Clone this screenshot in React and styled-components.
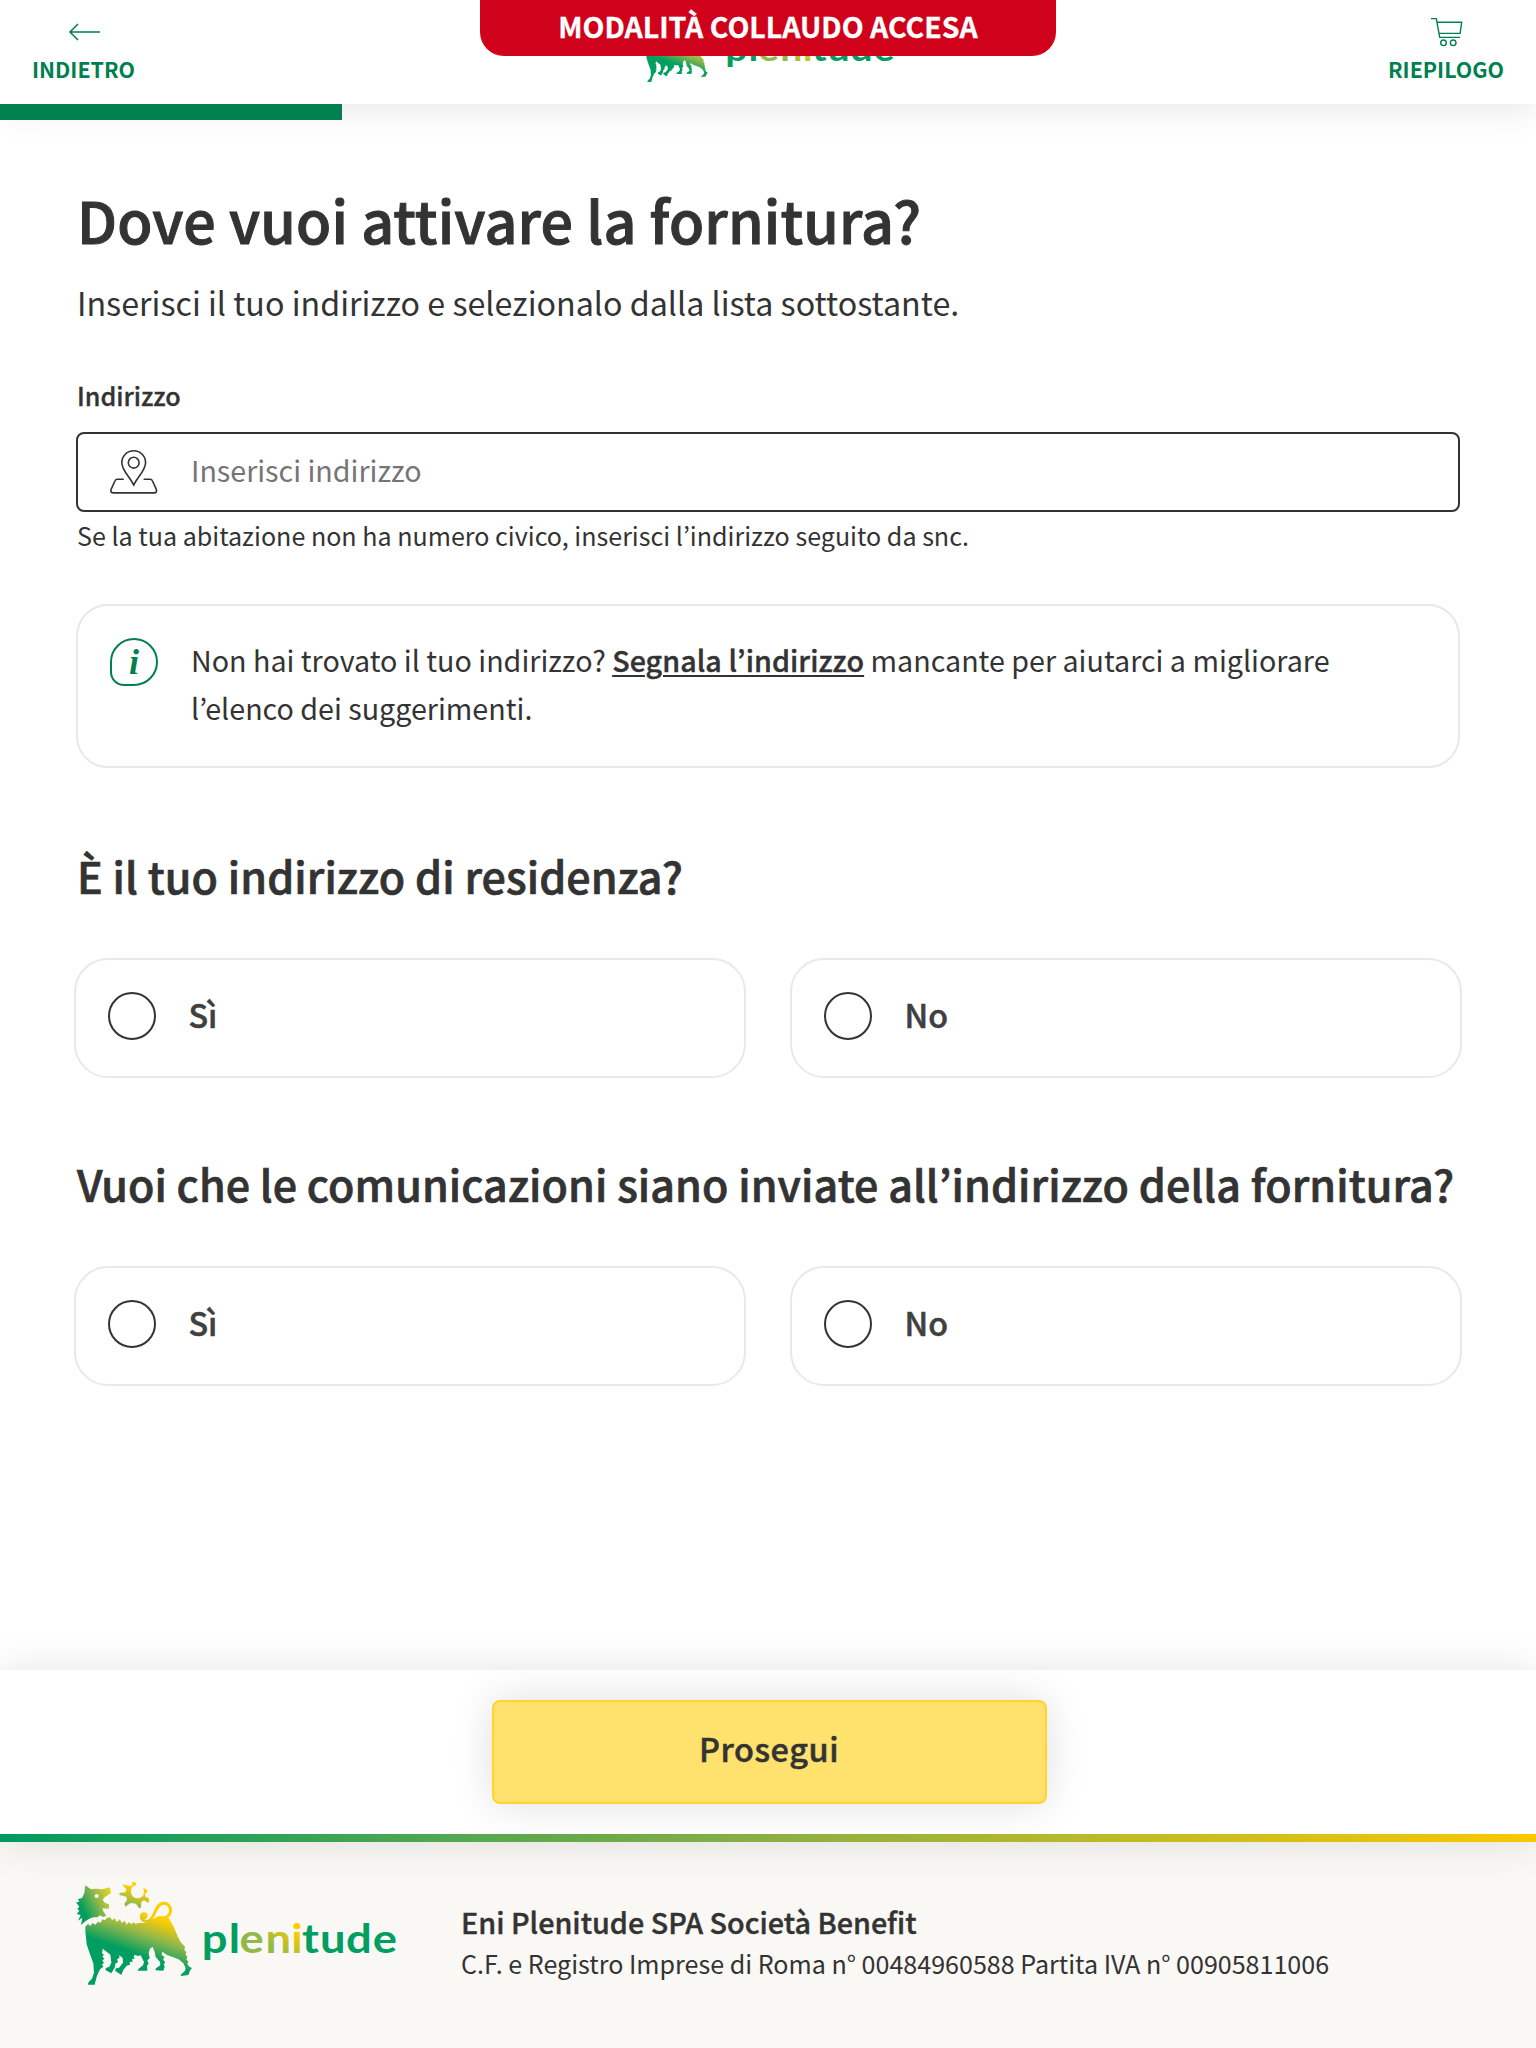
import React from "react";
import styled, { createGlobalStyle } from "styled-components";

const GREEN = "#00804f";
const INK = "#333333";
const LINE = "#e9e9e9";

const GlobalStyle = createGlobalStyle`
  *, *::before, *::after { box-sizing: border-box; }
  body {
    margin: 0;
    background: #fff;
    color: ${INK};
    font-family: "Noto Sans CJK JP", "Noto Sans", sans-serif;
    font-weight: 400;
  }
  h1, h2, p { margin: 0; }
`;

const Page = styled.div`
  display: flex;
  flex-direction: column;
  height: 2048px;
  overflow: hidden;
`;

/* ---------- header ---------- */

const Header = styled.header`
  position: relative;
  z-index: 1;
  display: grid;
  grid-template-columns: 1fr auto 1fr;
  height: 104px;
  padding: 0 32px;
  background: #fff;
  box-shadow: 0 0 40px rgba(0, 0, 0, 0.13);
`;

const HeaderAction = styled.button`
  justify-self: ${(p) => p.$side};
  display: flex;
  flex-direction: column;
  align-items: center;
  height: 104px;
  padding: 14px 0 0;
  border: 0;
  background: none;
  color: ${GREEN};
  font: 700 21.4px/36px "Noto Sans CJK JP", sans-serif;
  cursor: pointer;

  svg { flex: none; margin-bottom: 1px; }
`;

const HeaderLogo = styled.div`
  display: flex;
  align-items: flex-start;
  width: 263px;
  padding-top: 19px;

  svg { flex: none; }
`;

const TestBanner = styled.div`
  position: absolute;
  top: 0;
  left: 50%;
  z-index: 3;
  width: 576px;
  height: 56px;
  margin-left: -288px;
  border-radius: 0 0 24px 24px;
  background: #d0021b;
  color: #fff;
  font-size: 28.5px;
  font-weight: 700;
  line-height: 52px;
  text-align: center;
  -webkit-text-stroke: 0.3px;
`;

const Progress = styled.div`
  position: relative;
  z-index: 2;
  flex: none;
  width: 342px;
  height: 16px;
  background: ${GREEN};
`;

/* ---------- content ---------- */

const Main = styled.main`
  flex: 1;
  padding: 68px 76px 0;
`;

const Title = styled.h1`
  padding-left: 1px;
  font-size: 57.3px;
  font-weight: 500;
  line-height: 64px;
  letter-spacing: 0.16px;
  -webkit-text-stroke: 1px;
`;

const Lead = styled.p`
  margin-top: 26px;
  padding-left: 1px;
  font-size: 32.22px;
  line-height: 48px;
`;

const Label = styled.label`
  display: block;
  margin-top: 49px;
  padding-left: 1px;
  font-size: 25.1px;
  font-weight: 500;
  line-height: 40px;
  -webkit-text-stroke: 0.35px;
`;

const Field = styled.div`
  display: flex;
  align-items: center;
  height: 80px;
  margin-top: 17px;
  padding: 0 32px;
  border: 2px solid ${INK};
  border-radius: 8px;
`;

const Input = styled.input`
  flex: 1;
  height: 60px;
  margin-left: 33px;
  padding: 0 0 5px;
  border: 0;
  outline: 0;
  background: none;
  color: ${INK};
  font: 400 28.65px "Noto Sans CJK JP", sans-serif;

  &::placeholder { color: #757575; opacity: 1; }
`;

const Hint = styled.p`
  margin-top: 3px;
  padding-left: 1px;
  font-size: 25.07px;
  line-height: 40px;
`;

const Notice = styled.div`
  display: flex;
  gap: 33px;
  margin-top: 49px;
  height: 164px;
  padding: 32px;
  border: 2px solid ${LINE};
  border-radius: 32px;
`;

const InfoBadge = styled.span`
  flex: none;
  display: flex;
  justify-content: center;
  width: 48px;
  height: 48px;
  border: 2.5px solid ${GREEN};
  border-radius: 24px 24px 24px 14px;
  color: ${GREEN};
  font: italic 700 36px/45px "Liberation Serif", serif;
`;

const NoticeText = styled.p`
  margin-top: -2px;
  width: 1190px;
  font-size: 28.67px;
  line-height: 48px;

  a {
    color: inherit;
    font-weight: 500;
    letter-spacing: 0.07px;
    text-decoration: underline;
    text-decoration-thickness: 2px;
    text-underline-offset: 3px;
    -webkit-text-stroke: 0.4px;
  }
`;

const Question = styled.section`
  margin-top: ${(p) => p.$gap}px;
`;

const QuestionTitle = styled.h2`
  padding-left: 1px;
  font-size: 43px;
  font-weight: 500;
  line-height: 60px;
  letter-spacing: 0.07px;
  white-space: nowrap;
  -webkit-text-stroke: 0.7px;
`;

const Options = styled.div`
  display: grid;
  grid-template-columns: 1fr 1fr;
  gap: 44px;
  margin: 53px -2px 0;
`;

const Option = styled.div`
  display: flex;
  align-items: flex-start;
  gap: 32.5px;
  height: 120px;
  padding: 32px;
  border: 2px solid ${LINE};
  border-radius: 34px;
  color: #404040;
`;

const Radio = styled.span`
  width: 48px;
  height: 48px;
  border: 2px solid ${INK};
  border-radius: 50%;
`;

const OptionLabel = styled.span`
  padding-top: 2px;
  font-size: 32.25px;
  font-weight: 500;
  line-height: 40px;
  -webkit-text-stroke: 0.5px;
`;

/* ---------- bottom ---------- */

const ActionBar = styled.div`
  position: relative;
  z-index: 1;
  flex: none;
  display: flex;
  justify-content: center;
  height: 172px;
  padding: 30px 0 0 2px;
  border-bottom: 8px solid;
  border-image: linear-gradient(90deg, #009b5f, #8cb046 50%, #fac800) 1;
  background: #fff;
  box-shadow: 0 0 40px rgba(0, 0, 0, 0.11);
`;

const Submit = styled.button`
  width: 555px;
  height: 104px;
  padding: 0 0 8px;
  border: 2px solid #ffd42e;
  border-radius: 8px;
  background: #ffe26e;
  box-shadow: 0 0 40px rgba(0, 0, 0, 0.13);
  color: ${INK};
  font: 500 32.4px/40px "Noto Sans CJK JP", sans-serif;
  letter-spacing: 0.6px;
  -webkit-text-stroke: 0.5px;
`;

const Footer = styled.footer`
  flex: none;
  display: flex;
  height: 206px;
  padding: 34px 70px 0;
  background: #faf8f5;
`;

const FooterLogo = styled.div`
  display: flex;
  align-items: flex-start;
  width: 391px;
`;

const WordmarkSlot = styled.div`
  display: flex;
  padding-top: ${(p) => p.$top}px;
  margin-left: ${(p) => p.$left}px;
`;

const Company = styled.div`
  padding-top: 25px;
  white-space: nowrap;
`;

const CompanyName = styled.p`
  font-size: 28.75px;
  font-weight: 500;
  line-height: 42px;
  -webkit-text-stroke: 0.4px;
`;

const CompanyData = styled.p`
  font-size: 25.07px;
  line-height: 40px;
`;

/* ---------- drawings ---------- */

function SixLeggedDog({ width, id, paper }) {
  return (
    <svg width={width} height={(width * 342) / 390} viewBox="0 0 390 342" aria-hidden="true">
      <defs>
        <linearGradient id={`${id}-body`} gradientUnits="userSpaceOnUse" x1="262" y1="120" x2="215" y2="255">
          <stop offset="0.05" stopColor="#ffcd00" />
          <stop offset="0.45" stopColor="#93b84a" />
          <stop offset="0.9" stopColor="#009e60" />
        </linearGradient>
        <linearGradient id={`${id}-head`} gradientUnits="userSpaceOnUse" x1="34" y1="95" x2="122" y2="50">
          <stop offset="0" stopColor="#009e60" />
          <stop offset="0.55" stopColor="#93b84a" />
          <stop offset="1" stopColor="#dfd624" />
        </linearGradient>
        <linearGradient id={`${id}-sun`} gradientUnits="userSpaceOnUse" x1="182" y1="86" x2="204" y2="24">
          <stop offset="0" stopColor="#93b84a" />
          <stop offset="0.8" stopColor="#ffcd00" />
        </linearGradient>
      </defs>
      <path
        fill={`url(#${id}-head)`}
        d="M46 28L63 40L78 38L97 40L120 34L123 51L104 64L98 71L104 80L117 85L117 98L97 97L100 106L109 119L100 123L90 118L82 124L70 124L58 128L46 136L33 147L37 125L24 134L32 117L20 114L28 104L22 98L28 92L18 79L28 78L24 69L36 66L43 52Z"
      />
      <circle cx="80" cy="60" r="6" fill={paper} />
      <path
        fill={`url(#${id}-sun)`}
        d="M156 25L178 30L188 28L186 18L199 20L197 28C184 31 181 43 184 53C189 69 211 72 220 57C222 52 222 48 220 36L232 42L231 50L226 52L225 61L238 68L236 81L222 73L214 78L213 95L207 97L198 83L182 81L166 92L163 84L171 72L169 62L148 57L149 51L166 49L169 40Z"
      />
      <g fill="none" stroke={`url(#${id}-body)`} strokeWidth="9" strokeLinecap="round">
        <path d="M238 135C256 122 256 84 279 82C298 81 305 98 300 111C297 121 288 125 278 129" />
        <path d="M242 132C232 139 213 136 214 121C216 109 231 112 228 121C227 125 223 125 222 123" />
      </g>
      <path
        fill={`url(#${id}-body)`}
        d="M46 166L46 152L54 144L61 149L68 141L76 146L84 137L92 140L97 130L105 133L110 126L120 124L127 133L134 127L140 138L150 130L155 141L165 134L169 146L177 138L184 145L190 139L197 144L205 141L222 141L240 135L264 121L290 121L298 130L310 150L325 185L332 198L345 212L343 222L349 228L347 236L352 242L349 250L355 257L352 264L358 272L366 276L360 284L355 297L333 300L332 296L345 284L347 276L340 262L326 250L308 243L290 236L277 227L275 236L284 244L279 250L286 260L281 264L284 272L280 284L256 283L258 277L271 268L270 258L257 243L254 228L248 212L240 218L236 232L239 247L232 253L236 263L231 269L232 284L203 284L206 278L219 268L222 258L216 246L212 238L204 240L194 236L191 242L194 248L186 250L188 257L179 258L180 266L170 269L160 282L154 297L135 284L138 277L147 275L159 260L158 246L148 238L148 246L141 250L144 258L136 263L134 275L124 292L106 282L108 276L118 272L124 260L121 236L98 218L96 232L102 236L97 241L103 249L97 253L102 261L96 265L100 272L90 280L80 302L74 326L53 326L56 318L66 308L72 290L70 262L60 235L50 205Z"
      />
    </svg>
  );
}

const LETTERS = [
  ["p", -3.2, 0], ["l", 23.7, 0], ["e", 34.6, 1], ["n", 60.4, 1], ["i", 86.2, 1],
  ["t", 97, 0], ["u", 114.9, 0], ["d", 140.9, 0], ["e", 167.8, 0],
];

function Wordmark({ scale, id }) {
  const stretch = 1.12;
  return (
    <svg width={200 * scale} height={44 * scale} viewBox="0 -34 200 44" overflow="visible" aria-label="plenitude">
      <defs>
        <linearGradient id={`${id}-eni`} gradientUnits="userSpaceOnUse" x1="60" y1="-6" x2="80" y2="-26">
          <stop offset="0" stopColor="#93b84a" />
          <stop offset="1" stopColor="#ffcd00" />
        </linearGradient>
      </defs>
      <g transform={`scale(${stretch} 1)`} fontFamily="Lato, sans-serif" fontWeight="700" fontSize="40.5">
        {LETTERS.map(([ch, x, accent], i) => (
          <text key={i} x={x / stretch} y="0" fill={accent ? `url(#${id}-eni)` : "#009e60"}>
            {ch}
          </text>
        ))}
      </g>
    </svg>
  );
}

const ArrowIcon = () => (
  <svg width="36" height="36" viewBox="0 0 36 36" fill="none" stroke={GREEN} strokeWidth="1.5">
    <path d="M34 18H3.5M12 10L4 18L12 26" />
  </svg>
);

const CartIcon = () => (
  <svg width="36" height="36" viewBox="0 0 36 36" fill="none" stroke={GREEN} strokeWidth="1.4">
    <path d="M3 4.6H8.3L11.7 23.4H31.9M9.1 8.2H33.7L32.1 19.4H11.1" />
    <circle cx="15.5" cy="28.8" r="2.8" />
    <circle cx="25.2" cy="28.8" r="2.8" />
  </svg>
);

const MapPinIcon = () => (
  <svg width="48" height="44" viewBox="0 0 48 44" fill="none" stroke={INK} strokeWidth="1.6" strokeLinejoin="round" strokeLinecap="round">
    <path d="M23.7 35.3C20.5 27.5 11.8 20.5 11.8 12.7A11.9 11.9 0 0 1 35.6 12.7C35.6 20.5 26.9 27.5 23.7 35.3Z" />
    <circle cx="23.7" cy="12.7" r="5.4" />
    <path d="M13.2 29.3H7.4Q5.6 29.3 4.9 31L1.1 39.4Q.2 42.9 3.2 42.9H44.2Q47.2 42.9 46.3 39.4L42.5 31Q41.8 29.3 40 29.3H34.2" />
  </svg>
);

function YesNo({ title, gap }) {
  return (
    <Question $gap={gap}>
      <QuestionTitle>{title}</QuestionTitle>
      <Options role="radiogroup">
        {["Sì", "No"].map((label) => (
          <Option key={label} role="radio" aria-checked="false">
            <Radio />
            <OptionLabel>{label}</OptionLabel>
          </Option>
        ))}
      </Options>
    </Question>
  );
}

export default function App() {
  return (
    <Page>
      <GlobalStyle />
      <TestBanner>MODALITÀ COLLAUDO ACCESA</TestBanner>
      <Header>
        <HeaderAction $side="start">
          <ArrowIcon />
          INDIETRO
        </HeaderAction>
        <HeaderLogo>
          <SixLeggedDog width={75.5} id="top" paper="#fff" />
          <WordmarkSlot $top={13.4} $left={16}>
            <Wordmark scale={0.867} id="top" />
          </WordmarkSlot>
        </HeaderLogo>
        <HeaderAction $side="end">
          <CartIcon />
          RIEPILOGO
        </HeaderAction>
      </Header>
      <Progress />

      <Main>
        <Title>Dove vuoi attivare la fornitura?</Title>
        <Lead>Inserisci il tuo indirizzo e selezionalo dalla lista sottostante.</Lead>
        <Label htmlFor="address">Indirizzo</Label>
        <Field>
          <MapPinIcon />
          <Input id="address" placeholder="Inserisci indirizzo" />
        </Field>
        <Hint>Se la tua abitazione non ha numero civico, inserisci l’indirizzo seguito da snc.</Hint>

        <Notice>
          <InfoBadge>i</InfoBadge>
          <NoticeText>
            Non hai trovato il tuo indirizzo? <a>Segnala l’indirizzo</a> mancante per aiutarci a migliorare l’elenco dei
            suggerimenti.
          </NoticeText>
        </Notice>

        <YesNo gap={77} title="È il tuo indirizzo di residenza?" />
        <YesNo gap={75} title="Vuoi che le comunicazioni siano inviate all’indirizzo della fornitura?" />
      </Main>

      <ActionBar>
        <Submit>Prosegui</Submit>
      </ActionBar>
      <Footer>
        <FooterLogo>
          <SixLeggedDog width={130} id="foot" paper="#faf8f5" />
          <WordmarkSlot $top={42.8} $left={5}>
            <Wordmark scale={1} id="foot" />
          </WordmarkSlot>
        </FooterLogo>
        <Company>
          <CompanyName>Eni Plenitude SPA Società Benefit</CompanyName>
          <CompanyData>C.F. e Registro Imprese di Roma n° 00484960588 Partita IVA n° 00905811006</CompanyData>
        </Company>
      </Footer>
    </Page>
  );
}
